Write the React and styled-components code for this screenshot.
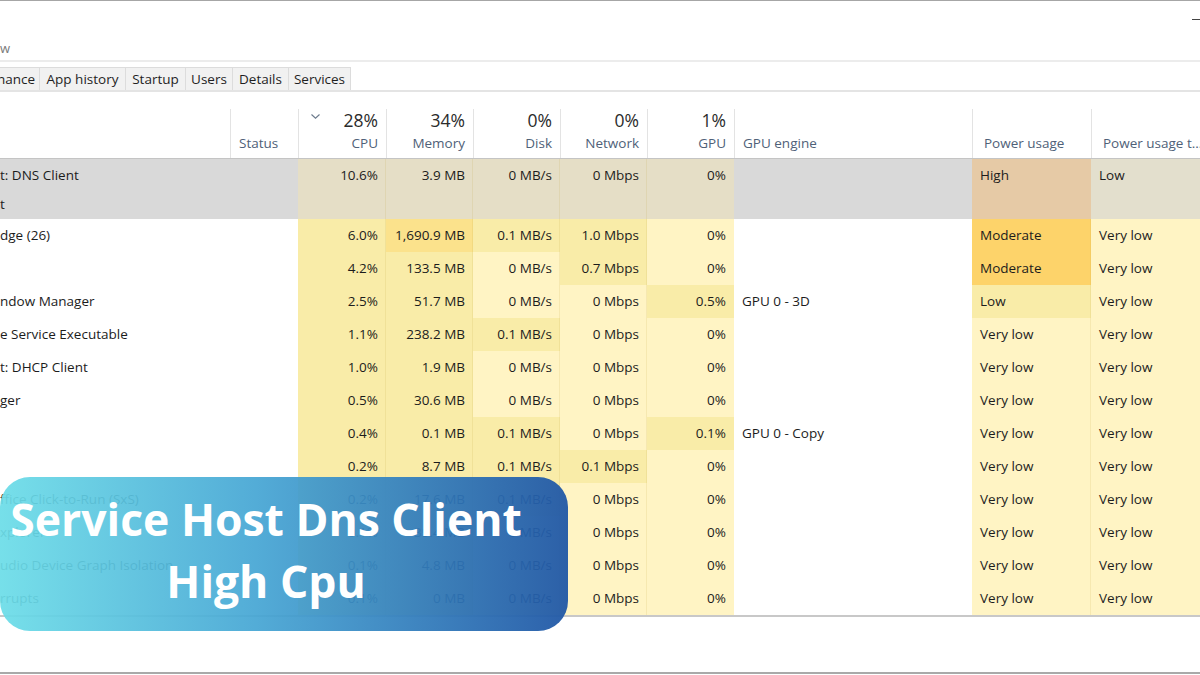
import React from "react";
import styled, { createGlobalStyle } from "styled-components";

const GlobalStyle = createGlobalStyle`
  html, body { margin: 0; padding: 0; background: #fff; }
  body {
    width: 1200px;
    height: 675px;
    overflow: hidden;
    font-family: "Open Sans", "Noto Sans", sans-serif;
    color: #1a1a1a;
  }
`;

const C = {
  white: "#ffffff",
  l0: "#fff4c4",
  l1: "#f9eca8",
  l2: "#fbe28c",
  mod: "#fdd36a",
  selName: "#d9d9d9",
  selData: "#e5dec6",
  selPower: "#e6caa6",
  selTrend: "#e3dfcd",
};

const COLS = "230px 68px 88px 87px 87px 87px 87px 238px 119px 1fr";

const Window = styled.div`
  position: relative;
  width: 1200px;
  height: 675px;
  display: flex;
  flex-direction: column;
  border-top: 1px solid #a6a6a6;
  box-sizing: border-box;
`;

const TitleBar = styled.div`
  height: 36px;
  display: flex;
  justify-content: flex-end;
  align-items: center;
  padding-top: 2px;
`;

const MinGlyph = styled.span`
  width: 8px;
  height: 1px;
  background: #444;
  margin-top: -4px;
`;

const MenuBar = styled.div`
  height: 23px;
  display: flex;
  align-items: center;
  font-size: 13px;
  line-height: 16px;
  padding-bottom: 3px;
  box-sizing: border-box;
  color: #7a7a7a;
  border-bottom: 2px solid #ececec;
`;

const TabStrip = styled.div`
  height: 28px;
  display: flex;
  align-items: flex-end;
  border-bottom: 2px solid #e4e4e4;
`;

const Tab = styled.div`
  height: 23px;
  box-sizing: border-box;
  display: flex;
  align-items: center;
  justify-content: ${(p) => (p.$clip ? "flex-end" : "center")};
  width: ${(p) => p.$w}px;
  overflow: hidden;
  white-space: nowrap;
  background: #f1f1f1;
  border: 1px solid #dcdcdc;
  border-bottom: none;
  border-left: ${(p) => (p.$clip ? "none" : "1px solid #dcdcdc")};
  margin-left: -1px;
  padding-right: ${(p) => (p.$clip ? "4px" : "0")};
  padding-bottom: 1px;
  font-size: 13.5px;
  color: #1f1f1f;
`;

const Gap = styled.div`
  height: 17px;
`;

const HeaderRow = styled.div`
  display: grid;
  grid-template-columns: ${COLS};
  height: 49px;
  border-bottom: 1px solid #c4c4c4;
`;

const HeadCell = styled.div`
  display: flex;
  flex-direction: column;
  justify-content: space-between;
  align-items: ${(p) => (p.$left ? "flex-start" : "flex-end")};
  padding: 0 ${(p) => (p.$left ? "0" : "8px")} 6px ${(p) => (p.$left ? `${p.$padLeft ?? 8}px` : "0")};
  border-left: ${(p) => (p.$noLine ? "none" : "1px solid #e3e3e3")};
  white-space: nowrap;
`;

const HeadTop = styled.div`
  width: 100%;
  display: flex;
  justify-content: space-between;
  align-items: flex-start;
  height: 22px;
`;

const Pct = styled.span`
  font-size: 17.5px;
  color: #2b2b2b;
  line-height: 22px;
  margin-left: auto;
`;

const Chevron = styled.svg`
  margin-left: 12px;
  margin-top: 5px;
`;

const Label = styled.span`
  font-size: 13.5px;
  line-height: 18px;
  color: #4f6178;
`;

const Row = styled.div`
  display: grid;
  grid-template-columns: ${COLS};
  height: ${(p) => (p.$tall ? 60 : 33)}px;
`;

const Cell = styled.div`
  background: ${(p) => p.$bg};
  display: flex;
  flex-direction: column;
  justify-content: ${(p) => (p.$top ? "flex-start" : "center")};
  align-items: ${(p) => (p.$right ? "flex-end" : "flex-start")};
  padding: ${(p) => (p.$top ? "2px" : "0")} ${(p) => (p.$right ? "8px" : "0")} 0 ${(p) => (p.$right ? "0" : p.$pad ?? 8)}px;
  box-shadow: ${(p) => (p.$line ? "inset -1px 0 0 rgba(190, 160, 60, 0.14)" : "none")};
  font-size: 13.5px;
  line-height: 29px;
  color: #1c1c1c;
  white-space: nowrap;
  overflow: hidden;
`;

const TableBottom = styled.div`
  border-top: 2px solid #c8c8c8;
  flex: 1;
  border-bottom: 2px solid #a9a9a9;
  margin-bottom: 1px;
`;

const Banner = styled.div`
  position: absolute;
  left: 0;
  top: 476px;
  width: 568px;
  height: 154px;
  border-radius: 30px;
  background: linear-gradient(90deg, rgba(108, 221, 232, 0.93) 0%, rgba(70, 166, 212, 0.93) 45%, rgba(33, 88, 166, 0.95) 100%);
  box-sizing: border-box;
  padding: 0 36px 8px 0;
  display: flex;
  flex-direction: column;
  justify-content: center;
  align-items: center;
`;

const BannerText = styled.div`
  font-family: "Open Sans", "Noto Sans", sans-serif;
  font-weight: 700;
  font-size: 44.5px;
  line-height: 62px;
  color: #ffffff;
  text-align: center;
  white-space: nowrap;
`;

const names = [
  "dge (26)",
  "",
  "ndow Manager",
  "e Service Executable",
  "t: DHCP Client",
  "ger",
  "",
  "",
  "ffice Click-to-Run (SxS)",
  "xplorer",
  "udio Device Graph Isolation",
  "rrupts",
];

// [cpu, mem, memLvl, disk, diskLvl, net, netLvl, gpu, gpuLvl, engine, power, powerLvl, trend]
const rows = [
  ["6.0%", "1,690.9 MB", 2, "0.1 MB/s", 1, "1.0 Mbps", 1, "0%", 0, "", "Moderate", "mod", "Very low"],
  ["4.2%", "133.5 MB", 1, "0 MB/s", 0, "0.7 Mbps", 1, "0%", 0, "", "Moderate", "mod", "Very low"],
  ["2.5%", "51.7 MB", 1, "0 MB/s", 0, "0 Mbps", 0, "0.5%", 1, "GPU 0 - 3D", "Low", 1, "Very low"],
  ["1.1%", "238.2 MB", 1, "0.1 MB/s", 1, "0 Mbps", 0, "0%", 0, "", "Very low", 0, "Very low"],
  ["1.0%", "1.9 MB", 1, "0 MB/s", 0, "0 Mbps", 0, "0%", 0, "", "Very low", 0, "Very low"],
  ["0.5%", "30.6 MB", 1, "0 MB/s", 0, "0 Mbps", 0, "0%", 0, "", "Very low", 0, "Very low"],
  ["0.4%", "0.1 MB", 1, "0.1 MB/s", 1, "0 Mbps", 0, "0.1%", 1, "GPU 0 - Copy", "Very low", 0, "Very low"],
  ["0.2%", "8.7 MB", 1, "0.1 MB/s", 1, "0.1 Mbps", 1, "0%", 0, "", "Very low", 0, "Very low"],
  ["0.2%", "17.6 MB", 1, "0.1 MB/s", 1, "0 Mbps", 0, "0%", 0, "", "Very low", 0, "Very low"],
  ["0.1%", "39.4 MB", 1, "0 MB/s", 0, "0 Mbps", 0, "0%", 0, "", "Very low", 0, "Very low"],
  ["0.1%", "4.8 MB", 1, "0 MB/s", 0, "0 Mbps", 0, "0%", 0, "", "Very low", 0, "Very low"],
  ["0.1%", "0 MB", 1, "0 MB/s", 0, "0 Mbps", 0, "0%", 0, "", "Very low", 0, "Very low"],
];

const lvl = (l) => (l === "mod" ? C.mod : l === 2 ? C.l2 : l === 1 ? C.l1 : C.l0);

const headers = [
  { pct: "", label: "", left: true, noLine: true },
  { pct: "", label: "Status", left: true },
  { pct: "28%", label: "CPU", chevron: true },
  { pct: "34%", label: "Memory" },
  { pct: "0%", label: "Disk" },
  { pct: "0%", label: "Network" },
  { pct: "1%", label: "GPU" },
  { pct: "", label: "GPU engine", left: true },
  { pct: "", label: "Power usage", left: true, padLeft: 11 },
  { pct: "", label: "Power usage t...", left: true, padLeft: 11 },
];

const tabs = [
  { t: "nance", w: 41, clip: true },
  { t: "App history", w: 87 },
  { t: "Startup", w: 61 },
  { t: "Users", w: 48 },
  { t: "Details", w: 57 },
  { t: "Services", w: 63 },
];

export default function App() {
  return (
    <>
      <GlobalStyle />
      <Window>
        <TitleBar>
          <MinGlyph />
        </TitleBar>
        <MenuBar>w</MenuBar>
        <TabStrip>
          {tabs.map((t) => (
            <Tab key={t.t} $w={t.w} $clip={t.clip}>
              {t.t}
            </Tab>
          ))}
        </TabStrip>
        <Gap />
        <HeaderRow>
          {headers.map((h, i) => (
            <HeadCell key={i} $left={h.left} $noLine={h.noLine} $padLeft={h.padLeft}>
              <HeadTop>
                {h.chevron && (
                  <Chevron width="9" height="5" viewBox="0 0 9 5">
                    <path d="M0.5 0.5 L4.5 4.2 L8.5 0.5" fill="none" stroke="#6b7a8c" strokeWidth="1.1" />
                  </Chevron>
                )}
                {h.pct && <Pct>{h.pct}</Pct>}
              </HeadTop>
              <Label>{h.label}</Label>
            </HeadCell>
          ))}
        </HeaderRow>

        <Row $tall>
          <Cell $bg={C.selName} $top $pad={0}>
            <span>t: DNS Client</span>
            <span>t</span>
          </Cell>
          <Cell $bg={C.selName} $top />
          <Cell $bg={C.selData} $top $right $line>10.6%</Cell>
          <Cell $bg={C.selData} $top $right $line>3.9 MB</Cell>
          <Cell $bg={C.selData} $top $right $line>0 MB/s</Cell>
          <Cell $bg={C.selData} $top $right $line>0 Mbps</Cell>
          <Cell $bg={C.selData} $top $right>0%</Cell>
          <Cell $bg={C.selName} $top />
          <Cell $bg={C.selPower} $top>High</Cell>
          <Cell $bg={C.selTrend} $top>Low</Cell>
        </Row>

        {rows.map((r, i) => (
          <Row key={i}>
            <Cell $bg={C.white} $pad={0}>{names[i]}</Cell>
            <Cell $bg={C.white} />
            <Cell $bg={C.l1} $right $line>{r[0]}</Cell>
            <Cell $bg={lvl(r[2])} $right $line>{r[1]}</Cell>
            <Cell $bg={lvl(r[4])} $right $line>{r[3]}</Cell>
            <Cell $bg={lvl(r[6])} $right $line>{r[5]}</Cell>
            <Cell $bg={lvl(r[8])} $right>{r[7]}</Cell>
            <Cell $bg={C.white}>{r[9]}</Cell>
            <Cell $bg={lvl(r[11])} $line>{r[10]}</Cell>
            <Cell $bg={C.l0}>{r[12]}</Cell>
          </Row>
        ))}
        <TableBottom />

        <Banner>
          <BannerText>Service Host Dns Client</BannerText>
          <BannerText>High Cpu</BannerText>
        </Banner>
      </Window>
    </>
  );
}
